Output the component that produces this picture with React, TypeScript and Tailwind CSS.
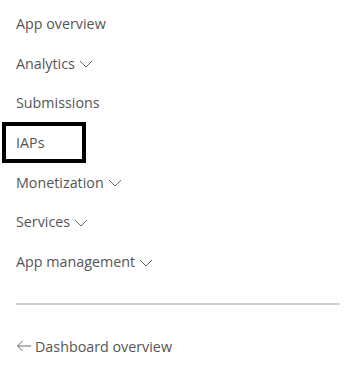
import React from "react";

const Chevron = () => (
  <svg width="14" height="8" viewBox="0 0 14 8" className="ml-[4px] mt-[2px]" fill="none">
    <path d="M1 1L7 7L13 1" stroke="#6b6b6b" strokeWidth="1" />
  </svg>
);

const items: { label: string; chevron?: boolean; boxed?: boolean }[] = [
  { label: "App overview" },
  { label: "Analytics", chevron: true },
  { label: "Submissions" },
  { label: "IAPs", boxed: true },
  { label: "Monetization", chevron: true },
  { label: "Services", chevron: true },
  { label: "App management", chevron: true },
];

export default function App() {
  return (
    <div
      className="w-[345px] h-[365px] bg-white text-[#555555] text-[14.3px]"
      style={{ fontFamily: '"Open Sans", "Noto Sans", sans-serif' }}
    >
      <div className="pt-[4px]">
        {items.map((it) => (
          <div key={it.label} className="h-[39.67px] flex items-center">
            {it.boxed ? (
              <div className="ml-[2px] w-[84px] h-[41px] border-[4px] border-black flex items-center pl-[10px]">
                {it.label}
              </div>
            ) : (
              <div className="pl-[16px] flex items-center">
                {it.label}
                {it.chevron && <Chevron />}
              </div>
            )}
          </div>
        ))}
      </div>
      <div className="ml-[16px] mr-[5px] mt-[21px] h-[2px] bg-[#d2d2d2]" />
      <div className="pl-[16px] mt-[31px] flex items-center">
        <svg width="16" height="12" viewBox="0 0 16 12" fill="none" className="mr-[3px]">
          <path d="M15 6H1.5M6.5 1L1.5 6L6.5 11" stroke="#6b6b6b" strokeWidth="1" />
        </svg>
        Dashboard overview
      </div>
    </div>
  );
}
